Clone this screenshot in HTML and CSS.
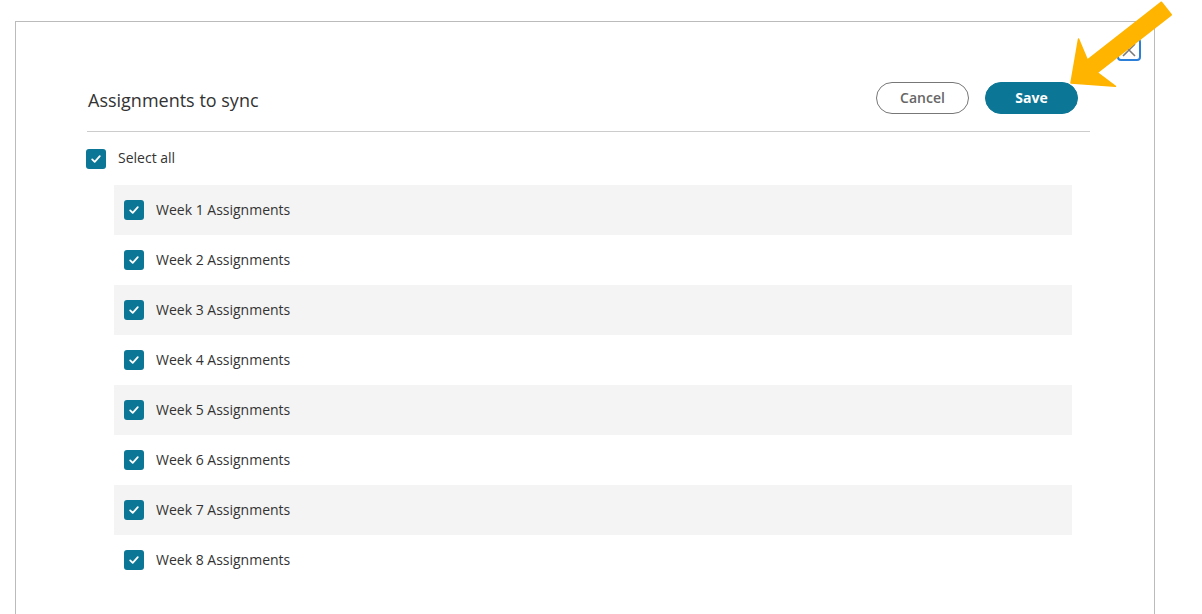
FILE: index.html
```html
<!DOCTYPE html>
<html lang="en">
<head>
<meta charset="utf-8">
<title>Assignments to sync</title>
<link rel="stylesheet" href="styles.css">
</head>
<body>
<div class="modal">
  <button class="close" aria-label="Close">
    <svg width="16" height="16" viewBox="0 0 16 16"><path d="M2 2 L14 14 M14 2 L2 14" stroke="#7a7a7a" stroke-width="1.6" fill="none"/></svg>
  </button>
  <div class="header">
    <h2 class="title">Assignments to sync</h2>
    <div class="actions">
      <button class="btn btn-cancel">Cancel</button>
      <button class="btn btn-save">Save</button>
    </div>
  </div>
  <label class="select-all">
    <span class="cb"><svg width="20" height="20" viewBox="0 0 20 20"><path d="M6.2 10.4 L8.7 12.9 L13.8 7.2" stroke="#fff" stroke-width="1.8" fill="none" stroke-linecap="round" stroke-linejoin="round"/></svg></span>
    <span class="label">Select all</span>
  </label>
  <ul class="list">
    <li class="row"><span class="cb"><svg width="20" height="20" viewBox="0 0 20 20"><path d="M6.2 10.4 L8.7 12.9 L13.8 7.2" stroke="#fff" stroke-width="1.8" fill="none" stroke-linecap="round" stroke-linejoin="round"/></svg></span><span class="label">Week 1 Assignments</span></li>
    <li class="row"><span class="cb"><svg width="20" height="20" viewBox="0 0 20 20"><path d="M6.2 10.4 L8.7 12.9 L13.8 7.2" stroke="#fff" stroke-width="1.8" fill="none" stroke-linecap="round" stroke-linejoin="round"/></svg></span><span class="label">Week 2 Assignments</span></li>
    <li class="row"><span class="cb"><svg width="20" height="20" viewBox="0 0 20 20"><path d="M6.2 10.4 L8.7 12.9 L13.8 7.2" stroke="#fff" stroke-width="1.8" fill="none" stroke-linecap="round" stroke-linejoin="round"/></svg></span><span class="label">Week 3 Assignments</span></li>
    <li class="row"><span class="cb"><svg width="20" height="20" viewBox="0 0 20 20"><path d="M6.2 10.4 L8.7 12.9 L13.8 7.2" stroke="#fff" stroke-width="1.8" fill="none" stroke-linecap="round" stroke-linejoin="round"/></svg></span><span class="label">Week 4 Assignments</span></li>
    <li class="row"><span class="cb"><svg width="20" height="20" viewBox="0 0 20 20"><path d="M6.2 10.4 L8.7 12.9 L13.8 7.2" stroke="#fff" stroke-width="1.8" fill="none" stroke-linecap="round" stroke-linejoin="round"/></svg></span><span class="label">Week 5 Assignments</span></li>
    <li class="row"><span class="cb"><svg width="20" height="20" viewBox="0 0 20 20"><path d="M6.2 10.4 L8.7 12.9 L13.8 7.2" stroke="#fff" stroke-width="1.8" fill="none" stroke-linecap="round" stroke-linejoin="round"/></svg></span><span class="label">Week 6 Assignments</span></li>
    <li class="row"><span class="cb"><svg width="20" height="20" viewBox="0 0 20 20"><path d="M6.2 10.4 L8.7 12.9 L13.8 7.2" stroke="#fff" stroke-width="1.8" fill="none" stroke-linecap="round" stroke-linejoin="round"/></svg></span><span class="label">Week 7 Assignments</span></li>
    <li class="row"><span class="cb"><svg width="20" height="20" viewBox="0 0 20 20"><path d="M6.2 10.4 L8.7 12.9 L13.8 7.2" stroke="#fff" stroke-width="1.8" fill="none" stroke-linecap="round" stroke-linejoin="round"/></svg></span><span class="label">Week 8 Assignments</span></li>
  </ul>
</div>
<svg class="pointer-arrow" width="1202" height="614" viewBox="0 0 1202 614">
  <g transform="translate(1071 83) rotate(-38)">
    <polygon points="0,0 33,-30 27,-8 121,-8 121,8 27,8 33,30" fill="#FFB400" stroke="#FFB400" stroke-width="1.5" stroke-linejoin="round"/>
  </g>
</svg>
</body>
</html>
```

FILE: styles.css
```css
* { box-sizing: border-box; }
html, body { margin: 0; padding: 0; background: #fff; overflow: hidden; }
body {
  font-family: "Open Sans", "Noto Sans", sans-serif;
  color: #333;
  width: 1202px;
  height: 614px;
}
.modal {
  position: relative;
  margin: 21px 47px 0 15px;
  border: 1px solid #bbb;
  border-bottom: none;
  padding: 60px 64px 0 71px;
  height: 640px;
}
.close {
  position: absolute;
  top: 16px;
  right: 13px;
  width: 24px;
  height: 23px;
  border: 2px solid #2b7fd9;
  border-radius: 4px;
  background: #fff;
  padding: 0;
  display: flex;
  align-items: center;
  justify-content: center;
}
.header {
  display: flex;
  align-items: center;
  justify-content: space-between;
  height: 50px;
  padding-bottom: 17px;
  border-bottom: 1px solid #ccc;
}
.title {
  margin: 0 0 0 1px;
  font-size: 18px;
  font-weight: 400;
  color: #333;
  position: relative;
  top: 2px;
}
.actions {
  display: flex;
  gap: 16px;
  margin-right: 12px;
}
.btn {
  width: 93px;
  height: 32px;
  border-radius: 16px;
  font-family: "Open Sans", sans-serif;
  font-size: 14px;
  font-weight: 600;
  padding: 0 0 2px;
}
.btn-cancel {
  background: #fff;
  border: 1px solid #777;
  color: #666;
}
.btn-save {
  background: #0b7695;
  border: 1px solid #0b7695;
  color: #fff;
  font-weight: 700;
}
.cb {
  width: 20px;
  height: 20px;
  border-radius: 3px;
  background: #0b7695;
  display: inline-flex;
  flex: none;
}
.label {
  font-size: 14px;
  color: #333;
  position: relative;
  top: -1px;
}
.select-all {
  display: flex;
  align-items: center;
  gap: 12px;
  height: 53px;
  margin-left: -1px;
}
.list {
  list-style: none;
  margin: 0 18px 0 27px;
  padding: 0;
}
.row {
  display: flex;
  align-items: center;
  gap: 12px;
  height: 50px;
  padding-left: 10px;
}
.row:nth-child(odd) { background: #f4f4f4; }
.pointer-arrow {
  position: absolute;
  left: 0;
  top: 0;
  pointer-events: none;
}
```
